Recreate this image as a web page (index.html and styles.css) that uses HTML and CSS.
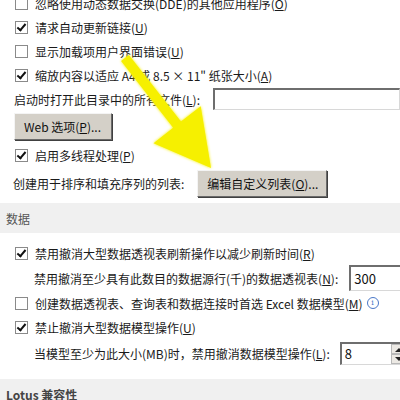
FILE: index.html
```html
<!DOCTYPE html>
<html lang="zh-CN">
<head>
  <meta charset="UTF-8">
  <title>Excel 选项 - 高级</title>
  <link rel="stylesheet" href="styles.css">
</head>
<body>
<div class="page">
  <div class="row r-first">
    <span class="box"></span><span>忽略使用动态数据交换(DDE)的其他应用程序(<u>O</u>)</span>
  </div>
  <div class="row">
    <span class="box checked"></span><span>请求自动更新链接(<u>U</u>)</span>
  </div>
  <div class="row">
    <span class="box"></span><span>显示加载项用户界面错误(<u>U</u>)</span>
  </div>
  <div class="row">
    <span class="box checked"></span><span>缩放内容以适应 A4 或 8.5 × 11" 纸张大小(<u>A</u>)</span>
  </div>
  <div class="row r-startup">
    <span class="label">启动时打开此目录中的所有文件(<u>L</u>):</span>
    <span class="field wide"></span>
  </div>
  <div class="row r-web">
    <button class="btn web">Web 选项(<u>P</u>)...</button>
  </div>
  <div class="row r-thread">
    <span class="box checked"></span><span>启用多线程处理(<u>P</u>)</span>
  </div>
  <div class="row r-list">
    <span class="label">创建用于排序和填充序列的列表:</span>
    <button class="btn edit">编辑自定义列表(<u>O</u>)...</button>
  </div>

  <div class="section">数据</div>

  <div class="row r-data1">
    <span class="box checked"></span><span>禁用撤消大型数据透视表刷新操作以减少刷新时间(<u>R</u>)</span>
  </div>
  <div class="row r-indent r-pivot">
    <span>禁用撤消至少具有此数目的数据源行(千)的数据透视表(<u>N</u>):</span>
    <span class="field spin s300"><span class="val">300</span><span class="arrows"><i class="up"></i><i class="down"></i></span></span>
  </div>
  <div class="row">
    <span class="box"></span><span>创建数据透视表、查询表和数据连接时首选 Excel 数据模型(<u>M</u>)</span>
    <span class="info">i</span>
  </div>
  <div class="row">
    <span class="box checked"></span><span>禁止撤消大型数据模型操作(<u>U</u>)</span>
  </div>
  <div class="row r-indent r-model">
    <span>当模型至少为此大小(MB)时，禁用撤消数据模型操作(<u>L</u>):</span>
    <span class="field spin s8"><span class="val">8</span><span class="arrows"><i class="up"></i><i class="down"></i></span></span>
  </div>

  <div class="section lotus">Lotus 兼容性</div>
</div>

<svg class="arrow" width="400" height="400" viewBox="0 0 400 400">
  <defs>
    <filter id="glow" x="-20%" y="-20%" width="140%" height="140%">
      <feGaussianBlur stdDeviation="1.6" result="b"/>
      <feMerge><feMergeNode in="b"/><feMergeNode in="SourceGraphic"/></feMerge>
    </filter>
  </defs>
  <polygon filter="url(#glow)" fill="#f6f000"
    points="128.9,54.9 181,121.6 200.7,106.2 211,168 153.5,143.2 173.2,127.8 121.1,61.1"/>
</svg>
</body>
</html>
```

FILE: styles.css
```css
body {
  margin: 0;
  background: #fff;
  color: #1a1a1a;
  font-family: "Noto Sans CJK SC", "Liberation Sans", sans-serif;
  font-size: 12px;
  overflow: hidden;
}
.page {
  margin-top: -9px;
  display: flex;
  flex-direction: column;
}
.row {
  display: flex;
  align-items: center;
  height: 24px;
  padding-left: 15px;
  white-space: nowrap;
}
u { text-decoration: underline; text-underline-offset: 1px; }

.box {
  width: 11px;
  height: 11px;
  border: 1px solid #8a8a8a;
  background: #fff;
  margin-right: 7px;
  flex: none;
  position: relative;
}
.box.checked::after {
  content: "";
  position: absolute;
  left: 3px;
  top: 0px;
  width: 3px;
  height: 7px;
  border: solid #111;
  border-width: 0 2px 2px 0;
  transform: rotate(40deg);
}

.label { margin-left: -1px; }

.field {
  border-top: 2px solid #6e6e6e;
  border-left: 2px solid #6e6e6e;
  border-bottom: 1px solid #d8d8d8;
  border-right: 1px solid #d8d8d8;
  background: #fff;
  box-sizing: border-box;
}
.field.wide {
  margin-left: 13px;
  width: 200px;
  height: 22px;
}

.btn {
  font: inherit;
  color: #111;
  background: #d4d0c8;
  border: 1px solid #f4f4f4;
  border-right-color: #6a6a6a;
  border-bottom-color: #6a6a6a;
  box-shadow: 1px 1px 0 #404040;
  padding: 0 8px;
  cursor: pointer;
}
.r-web { height: 27px; margin-top: 2px; padding-left: 14px; }
.btn.web { height: 27px; width: 98px; padding: 0 0 0 9px; text-align: left; }
.r-thread { margin-top: 3px; }
.r-list { height: 28px; margin-top: 2px; padding-left: 14px; }
.btn.edit { margin-left: 13px; height: 27px; width: 130px; text-align: left; padding-left: 9px; }

.section {
  margin-top: 6px;
  height: 30px;
  background: #f0f0f0;
  color: #555;
  display: flex;
  align-items: center;
  padding-left: 6px;
}
.section.lotus {
  margin-top: 14px;
  font-weight: bold;
  color: #444;
}

.r-data1 { margin-top: 8px; }
.r-indent { padding-left: 34px; }
.r-pivot { height: 26px; }

.spin {
  display: flex;
  align-items: center;
  flex: none;
}
.s300 { margin-left: 11px; width: 60px; height: 26px; }
.s8 { margin-left: 10px; width: 70px; height: 23px; }
.spin .val { flex: 1; padding-left: 3px; font-size: 13px; color: #111; }
.arrows {
  width: 14px;
  align-self: stretch;
  display: flex;
  flex-direction: column;
  margin-right: 4px;
}
.s300 .arrows { margin-right: -6px; }
.arrows i {
  flex: 1;
  background: #ece9e4;
  border: 1px solid #b8b8b8;
  position: relative;
}
.arrows i::after {
  content: "";
  position: absolute;
  left: 3px;
  border-left: 4px solid transparent;
  border-right: 4px solid transparent;
}
.arrows .up::after { top: 3px; border-bottom: 4px solid #222; }
.arrows .down::after { top: 2px; border-top: 4px solid #222; }

.info {
  width: 10px;
  height: 10px;
  border: 1px solid #4a78c8;
  border-radius: 50%;
  color: #4a78c8;
  font-size: 8px;
  line-height: 10px;
  text-align: center;
  margin-left: 4px;
  font-family: "DejaVu Serif", serif;
}
.r-model { margin-top: 2px; }

.arrow {
  position: absolute;
  left: 0;
  top: 0;
  pointer-events: none;
}
```
